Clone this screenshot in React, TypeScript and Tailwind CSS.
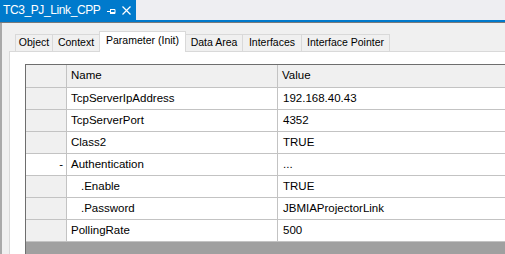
import React from 'react';

const tabs = ['Object', 'Context', 'Parameter (Init)', 'Data Area', 'Interfaces', 'Interface Pointer'];
const tabWidths = ['w-[38px]', 'w-[48px]', 'w-[87px]', 'w-[58px]', 'w-[60px]', 'w-[89px]'];

const rows = [
  { mark: '', name: 'TcpServerIpAddress', value: '192.168.40.43', child: false, white: false },
  { mark: '', name: 'TcpServerPort', value: '4352', child: false, white: false },
  { mark: '', name: 'Class2', value: 'TRUE', child: false, white: false },
  { mark: '-', name: 'Authentication', value: '...', child: false, white: true },
  { mark: '', name: '.Enable', value: 'TRUE', child: true, white: false },
  { mark: '', name: '.Password', value: 'JBMIAProjectorLink', child: true, white: false },
  { mark: '', name: 'PollingRate', value: '500', child: false, white: false },
];

function PinIcon() {
  return (
    <svg width="9" height="7" viewBox="0 0 9 7" className="block">
      <path d="M0 3.5h3.5M3.5 1v5M3.5 1.5h4.5v4h-4.5M3.5 4.5h4.5" stroke="white" strokeWidth="1" fill="none" />
    </svg>
  );
}

function CloseIcon() {
  return (
    <svg width="9" height="9" viewBox="0 0 9 9" className="block">
      <path d="M0.5 0.5l8 8M8.5 0.5l-8 8" stroke="white" strokeWidth="1.2" fill="none" />
    </svg>
  );
}

export default function App() {
  return (
    <div className="w-[505px] h-[254px] overflow-hidden flex flex-col bg-[#f0f0f0] text-black font-['Liberation_Sans',Arial,sans-serif]">
      {/* document tab */}
      <div className="h-[20px] flex shrink-0 bg-[#eeeef2]">
        <div className="w-[136px] h-full bg-[#007acc] flex items-center pl-[3px] text-white text-[12px]">
          <span className="tracking-[-0.4px]">TC3_PJ_Link_CPP</span>
          <span className="ml-[7px] mt-[2px]"><PinIcon /></span>
          <span className="ml-[6px]"><CloseIcon /></span>
        </div>
      </div>
      <div className="h-[2px] shrink-0 bg-[#007acc]" />
      <div className="h-[1px] shrink-0 bg-[#7a7a7a]" />

      <div className="flex flex-1 min-h-0">
        <div className="w-[2px] bg-[#a9a9a9] shrink-0" />
        <div className="flex-1 flex flex-col min-w-0 pl-[7px]">
          {/* tab strip */}
          <div className="h-[28px] flex items-end pl-[6px] shrink-0">
            {tabs.map((t, i) =>
              i === 2 ? (
                <div
                  key={t}
                  className={`${tabWidths[i]} h-[21px] -mb-px -ml-px bg-white border border-b-0 border-[#d9d9d9] flex items-center justify-center text-[10.5px] pb-[2px] relative z-10`}
                >
                  {t}
                </div>
              ) : (
                <div
                  key={t}
                  className={`${tabWidths[i]} h-[17px] bg-[#f0f0f0] border border-b-0 border-[#d9d9d9] -ml-px first:ml-0 flex items-center justify-center text-[10.5px]`}
                >
                  {t}
                </div>
              )
            )}
          </div>

          {/* tab page */}
          <div className="flex-1 min-h-0 bg-white border-l border-t border-[#d9d9d9] pt-[12px] pl-[15px] flex">
            <div className="flex-1 flex flex-col border-l border-t border-[#6e6e6e] text-[11.5px]">
              <div className="h-[23px] flex border-b border-[#c3c3c3] bg-[#f0f0f0] shrink-0">
                <div className="w-[41px] border-r border-[#c3c3c3]" />
                <div className="w-[211px] border-r border-[#c3c3c3] pl-[4px] flex items-center">Name</div>
                <div className="flex-1 pl-[4px] flex items-center">Value</div>
              </div>
              {rows.map((r) => (
                <div key={r.name} className="h-[22px] flex border-b border-[#c3c3c3] shrink-0">
                  <div
                    className={`w-[41px] border-r border-[#c3c3c3] flex items-center justify-end pr-[3px] ${r.white ? 'bg-white' : 'bg-[#f0f0f0]'}`}
                  >
                    {r.mark}
                  </div>
                  <div className={`w-[211px] border-r border-[#c3c3c3] flex items-center ${r.child ? 'pl-[14px]' : 'pl-[4px]'}`}>
                    {r.name}
                  </div>
                  <div className="flex-1 pl-[5px] flex items-center">{r.value}</div>
                </div>
              ))}
              <div className="flex-1 bg-[#a0a0a0]" />
            </div>
          </div>
        </div>
      </div>
    </div>
  );
}
